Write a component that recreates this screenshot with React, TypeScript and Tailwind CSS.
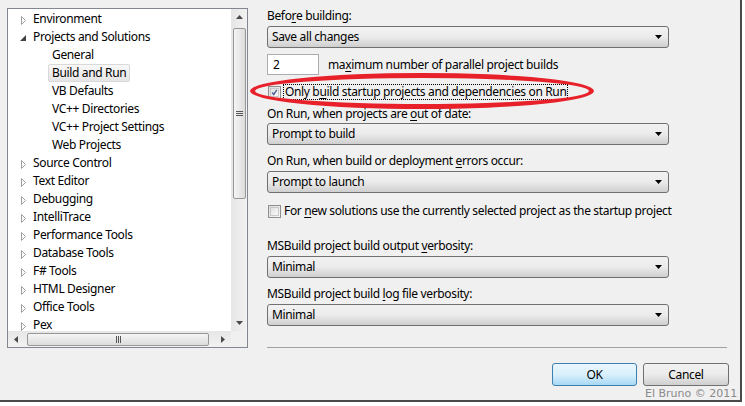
import type { ReactNode } from "react";

const font = { fontFamily: '"Noto Sans", "Segoe UI", sans-serif' };

type Node = { label: string; level: 0 | 1; state?: "open" | "closed"; selected?: boolean };

const tree: Node[] = [
  { label: "Environment", level: 0, state: "closed" },
  { label: "Projects and Solutions", level: 0, state: "open" },
  { label: "General", level: 1 },
  { label: "Build and Run", level: 1, selected: true },
  { label: "VB Defaults", level: 1 },
  { label: "VC++ Directories", level: 1 },
  { label: "VC++ Project Settings", level: 1 },
  { label: "Web Projects", level: 1 },
  { label: "Source Control", level: 0, state: "closed" },
  { label: "Text Editor", level: 0, state: "closed" },
  { label: "Debugging", level: 0, state: "closed" },
  { label: "IntelliTrace", level: 0, state: "closed" },
  { label: "Performance Tools", level: 0, state: "closed" },
  { label: "Database Tools", level: 0, state: "closed" },
  { label: "F# Tools", level: 0, state: "closed" },
  { label: "HTML Designer", level: 0, state: "closed" },
  { label: "Office Tools", level: 0, state: "closed" },
  { label: "Pex", level: 0, state: "closed" },
];

function Expander({ state }: { state?: "open" | "closed" }) {
  if (state === "open") {
    return (
      <svg width="6" height="6" viewBox="0 0 6 6" className="ml-[12px] mr-[3px] mt-[2px]">
        <polygon points="6,0 6,6 0,6" fill="#404040" />
      </svg>
    );
  }
  return (
    <svg width="6" height="9" viewBox="0 0 6 9" className="ml-[13px] mr-[2px] mt-[2px]">
      <polygon points="0.5,0.5 4.5,4.5 0.5,8.5" fill="#fff" stroke="#a0a0a0" strokeWidth="1" />
    </svg>
  );
}

function TreeRow({ node }: { node: Node }) {
  return (
    <div className="flex h-[18px] items-center whitespace-nowrap">
      {node.level === 0 ? <Expander state={node.state} /> : <div className="w-[40px]" />}
      <span
        className={`rounded-[2px] border px-[3px] leading-[16px] ${
          node.selected
            ? "border-[#d9d9d9] bg-gradient-to-b from-[#f8f8f8] to-[#e5e5e5]"
            : "border-transparent"
        }`}
      >
        {node.label}
      </span>
    </div>
  );
}

function Arrow({ dir }: { dir: "up" | "down" | "left" | "right" }) {
  const pts = {
    up: "0,4 3.5,0 7,4",
    down: "0,0 3.5,4 7,0",
    left: "4,0 0,3.5 4,7",
    right: "0,0 4,3.5 0,7",
  }[dir];
  const v = dir === "up" || dir === "down";
  return (
    <svg width={v ? 7 : 4} height={v ? 4 : 7} viewBox={v ? "0 0 7 4" : "0 0 4 7"}>
      <polygon points={pts} fill="#4a4a4a" />
    </svg>
  );
}

function Grip({ vertical }: { vertical?: boolean }) {
  return (
    <div className={`flex ${vertical ? "flex-col gap-[1px]" : "flex-row gap-[1px]"}`}>
      {[0, 1, 2].map((i) => (
        <div key={i} className={vertical ? "h-[1px] w-[7px] bg-[#555]" : "h-[7px] w-[1px] bg-[#555]"} />
      ))}
    </div>
  );
}

function Select({ value }: { value: string }) {
  return (
    <div className="relative flex h-[22px] w-[402px] items-center overflow-hidden rounded-[3px] border border-[#707070] bg-gradient-to-b from-[#f2f2f2] via-[#ebebeb] to-[#cfcfcf] pl-[4px]">
      <span className="leading-[16px]">{value}</span>
      <div className="ml-auto mr-[6px] flex items-center">
        <svg width="7" height="4" viewBox="0 0 7 4">
          <polygon points="0,0 7,0 3.5,4" fill="#000" />
        </svg>
      </div>
    </div>
  );
}

function Checkbox({ checked }: { checked?: boolean }) {
  return (
    <div className="flex h-[13px] w-[13px] items-center justify-center border border-[#8e8f8f] bg-gradient-to-br from-[#dcdcdc] to-[#f8f8f8]">
      <div className="flex h-[9px] w-[9px] items-center justify-center border border-[#c8c8c8] bg-gradient-to-br from-[#e0e0e0] to-[#fafafa]">
        {checked && (
          <svg width="9" height="9" viewBox="0 0 9 9">
            <path d="M1.5 4.5 L3.5 7 L7.5 1" fill="none" stroke="#4a5f97" strokeWidth="1.8" />
          </svg>
        )}
      </div>
    </div>
  );
}

function U({ children }: { children: ReactNode }) {
  return <span className="underline underline-offset-2">{children}</span>;
}

function Label({ children, className = "" }: { children: ReactNode; className?: string }) {
  return <div className={`h-[16px] leading-[16px] whitespace-nowrap ${className}`}>{children}</div>;
}

export default function App() {
  return (
    <div className="relative h-[406px] w-[745px] bg-white text-[12px] tracking-[-0.35px] text-black" style={font}>
      <div className="flex h-[402px] w-[742px] flex-col border-b-2 border-r-2 border-[#4a4a4a] bg-[#f0f0f0] pl-[7px] pt-[8px]">
        <div className="flex">
          {/* tree */}
          <div className="grid h-[340px] w-[241px] grid-cols-[223px_16px] grid-rows-[322px_16px] border border-[#828790] bg-white">
            <div className="overflow-hidden pt-[1px]">
              {tree.map((n) => (
                <TreeRow key={n.label} node={n} />
              ))}
            </div>
            <div className="flex flex-col items-center bg-gradient-to-r from-[#e6e6e6] to-[#f2f2f2]">
              <div className="flex h-[16px] items-center">
                <Arrow dir="up" />
              </div>
              <div className="mt-[3px] flex h-[171px] w-[13px] items-center justify-center rounded-[2px] border border-[#979797] bg-gradient-to-r from-[#f5f5f5] to-[#dcdcdc]">
                <Grip vertical />
              </div>
              <div className="mt-auto flex h-[16px] items-center">
                <Arrow dir="down" />
              </div>
            </div>
            <div className="flex items-center bg-gradient-to-b from-[#e6e6e6] to-[#f2f2f2]">
              <div className="flex w-[16px] items-center justify-center">
                <Arrow dir="left" />
              </div>
              <div className="ml-[3px] flex h-[13px] w-[182px] items-center justify-center rounded-[2px] border border-[#979797] bg-gradient-to-b from-[#f5f5f5] to-[#dcdcdc]">
                <Grip />
              </div>
              <div className="ml-auto flex w-[16px] items-center justify-center">
                <Arrow dir="right" />
              </div>
            </div>
            <div className="bg-[#f0f0f0]" />
          </div>

          {/* settings */}
          <div className="ml-[19px] flex h-[340px] w-[460px] flex-col">
            <Label>
              Befo<U>r</U>e building:
            </Label>
            <div className="mt-[2px]">
              <Select value="Save all changes" />
            </div>
            <div className="mt-[6px] flex h-[21px] items-center">
              <div className="flex h-[21px] w-[52px] items-center border border-[#abadb3] bg-white pl-[5px]">2</div>
              <span className="ml-[9px] leading-[16px]">
                ma<U>x</U>imum number of parallel project builds
              </span>
            </div>
            <div className="mt-[9px] flex h-[16px] items-center">
              <div className="ml-[1px]">
                <Checkbox checked />
              </div>
              <span className="ml-[2px] border border-dotted border-black px-[1px] leading-[14px] whitespace-nowrap">
                Only b<U>u</U>ild startup projects and dependencies on Run
              </span>
            </div>
            <Label className="mt-[6px]">
              On Run, when projects are <U>o</U>ut of date:
            </Label>
            <div className="mt-[1px]">
              <Select value="Prompt to build" />
            </div>
            <Label className="mt-[8px]">
              On Run, when build or deployment <U>e</U>rrors occur:
            </Label>
            <div className="mt-[2px]">
              <Select value="Prompt to launch" />
            </div>
            <div className="mt-[10px] flex h-[16px] items-center">
              <div className="ml-[1px]">
                <Checkbox />
              </div>
              <span className="ml-[3px] whitespace-nowrap leading-[16px]">
                For <U>n</U>ew solutions use the currently selected project as the startup project
              </span>
            </div>
            <Label className="mt-[19px]">
              MSBuild project build output <U>v</U>erbosity:
            </Label>
            <div className="mt-[2px]">
              <Select value="Minimal" />
            </div>
            <Label className="mt-[8px]">
              MSBuild project build <U>l</U>og file verbosity:
            </Label>
            <div className="mt-[2px]">
              <Select value="Minimal" />
            </div>
            <div className="mt-auto h-[1px] w-[460px] bg-[#a0a0a0]" />
          </div>
        </div>

        <div className="mt-[15px] flex justify-end gap-[6px] pr-[11px]">
          <button
            type="button"
            className="flex h-[23px] w-[85px] items-center justify-center rounded-[3px] border border-[#3c7fb1] bg-gradient-to-b from-[#eaf6fd] via-[#d9f0fc] to-[#a7d9f5]"
          >
            OK
          </button>
          <button
            type="button"
            className="flex h-[23px] w-[86px] items-center justify-center rounded-[3px] border border-[#707070] bg-gradient-to-b from-[#f2f2f2] via-[#ebebeb] to-[#cfcfcf]"
          >
            Cancel
          </button>
        </div>
      </div>

      {/* highlight drawn over the screenshot */}
      <div className="pointer-events-none absolute left-[250px] top-[73px] h-[36px] w-[344px] rounded-[50%] border-[5px] border-[#e8202a]" />

      <div
        className="absolute left-[645px] top-[387px] text-[11px] leading-[13px] tracking-normal text-[#8a8a8a]"
        style={{ fontFamily: '"DejaVu Sans", sans-serif' }}
      >
        El Bruno © 2011
      </div>
    </div>
  );
}
